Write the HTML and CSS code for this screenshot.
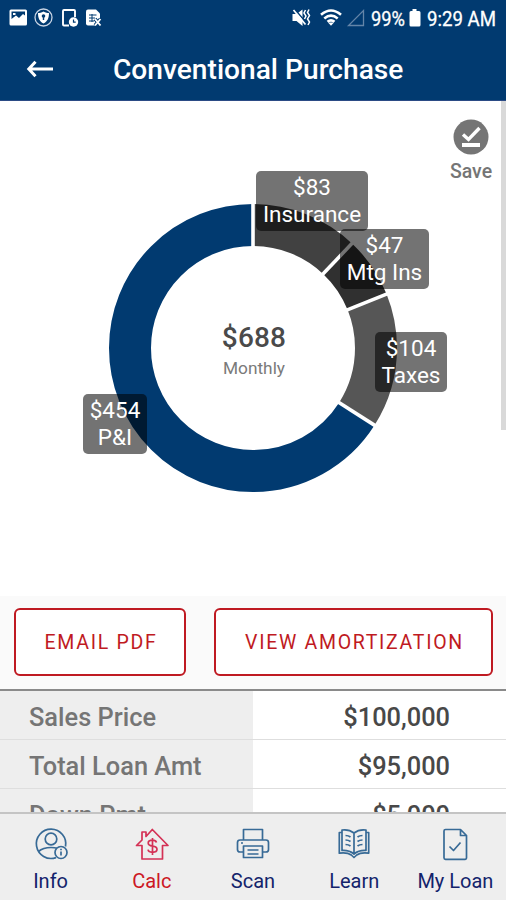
FILE: index.html
```
<!DOCTYPE html>
<html lang="en">
<head>
<meta charset="utf-8">
<title>Conventional Purchase</title>
<link rel="stylesheet" href="styles.css">
</head>
<body>
<div class="app">
	<div class="header">
		<svg class="status" width="506" height="37" viewBox="0 0 506 37">
			<!-- notifications -->
			<g fill="#fff">
				<path fill-rule="evenodd" d="M11 9.500h14.500q1.500 0 1.500 1.500v13q0 1.500-1.500 1.500h-14.500q-1.500 0-1.500-1.500v-13q0-1.500 1.500-1.500zM11.500 11.500v7.500l4.500-3.500 3 2.500 4-4 2 1.500v-4zM13 13h2.500v2h-2.500z"/>
				<circle cx="43.500" cy="17.500" r="8.500" fill="none" stroke="#c9d4e4" stroke-width="1.300"/>
				<path d="M43.500 11.500c2 1.300 4 1.500 5.500 1.500 0 5-1.500 8.500-5.500 10.500-4-2-5.500-5.500-5.500-10.500 1.500 0 3.500-.2 5.500-1.500z"/>
				<circle cx="43.500" cy="16" r="1.800" fill="#013a70"/>
				<path d="M42.800 16h1.400v4h-1.400z" fill="#013a70"/>
				<path d="M75 17v-6q0-1-1-1h-10q-1 0-1 1v13.500q0 1 1 1h5" fill="none" stroke="#fff" stroke-width="1.900"/>
				<circle cx="73.500" cy="22" r="4.700"/>
				<path d="M73.500 19.500v2.700h2.200" fill="none" stroke="#013a70" stroke-width="1.200"/>
				<path d="M88 9.500h8l4 4v6l-3 6h-9q-2 0-2-2v-12q0-2 2-2z"/>
				<path d="M89 15h7.500M89 18h6M89 21h5M92 14v8" stroke="#013a70" stroke-width="1"/>
				<path d="M95 19l5.500 6.500M100.500 19l-5.500 6.500" stroke="#013a70" stroke-width="3.500"/>
				<path d="M95 19l5.500 6.500M100.500 19l-5.500 6.500" stroke="#fff" stroke-width="1.900"/>
			</g>
			<!-- muted, wifi, signal, battery -->
			<path d="M292.500 14h4l6-4.500v16.500l-6-5h-4z" fill="#fff"/>
			<path d="M295 9.500l11 13" stroke="#013a70" stroke-width="1.500"/>
			<path d="M293.500 10l12 14.500" stroke="#fff" stroke-width="1.700"/>
			<path d="M305.500 10l-1.500 3 2 3-1.500 3M309 9.500l-1.500 3 2 3-2 3.500 2 3-1.500 3" fill="none" stroke="#fff" stroke-width="1.500"/>
			<g fill="none" stroke="#fff" stroke-width="2.600">
				<path d="M321 14.800q10-8.600 20 0"/>
				<path d="M324.300 18.500q6.700-5.700 13.400 0"/>
				<path d="M327.500 21.800q3.500-3 7 0"/>
			</g>
			<path d="M328 22.500h6l-3 3.200z" fill="#fff"/>
			<path d="M363.500 10.500v15h-15z" fill="none" stroke="#6485a8" stroke-width="1.300"/>
			<text x="371" y="26" textLength="34" lengthAdjust="spacingAndGlyphs">99%</text>
			<path d="M412.500 9h4v2h2.500q1.500 0 1.500 1.500v12.500q0 1.500-1.500 1.500h-8q-1.500 0-1.500-1.500v-12.500q0-1.500 1.500-1.500h1.500z" fill="#fff"/>
			<text x="427" y="26" textLength="69" lengthAdjust="spacingAndGlyphs">9:29 AM</text>
		</svg>
		<div class="titleBar">
			<svg class="back" width="28" height="20" viewBox="0 0 28 20"><path d="M27 10H3M9.500 2.800L2.800 10l6.700 7.200" fill="none" stroke="#fff" stroke-width="3"/></svg>
			<h1>Conventional Purchase</h1>
		</div>
	</div>

	<div class="chart">
		<svg class="donut" width="290" height="290" viewBox="-145 -145 290 290">
			<g class="slices" transform="rotate(-90)" fill="none" stroke-width="42">
				<circle r="123" pathLength="688" stroke="#414141" stroke-dasharray="83 605"/>
				<circle r="123" pathLength="688" stroke="#303030" stroke-dasharray="47 641" stroke-dashoffset="-83"/>
				<circle r="123" pathLength="688" stroke="#565656" stroke-dasharray="104 584" stroke-dashoffset="-130"/>
				<circle r="123" pathLength="688" stroke="#013a70" stroke-dasharray="454 234" stroke-dashoffset="-234"/>
			</g>
			<g stroke="#fff" stroke-width="3.600">
				<path d="M0-99V-148"/>
				<path d="M0-99V-148" transform="rotate(43.430)"/>
				<path d="M0-99V-148" transform="rotate(68.020)"/>
				<path d="M0-99V-148" transform="rotate(122.440)"/>
			</g>
		</svg>
		<div class="total">
			<b>$688</b>
			<span>Monthly</span>
		</div>
		<div class="tag insurance">$83<br>Insurance</div>
		<div class="tag mtg">$47<br>Mtg Ins</div>
		<div class="tag taxes">$104<br>Taxes</div>
		<div class="tag pi">$454<br>P&amp;I</div>
		<div class="save">
			<svg width="36" height="36" viewBox="0 0 36 36">
				<circle cx="18" cy="18" r="17.500" fill="#757575"/>
				<path d="M10 15.500l5.500 5L26.500 9" fill="none" stroke="#fff" stroke-width="3.400"/>
				<path d="M9 24h18v4H9z" fill="#fff"/>
			</svg>
			<span>Save</span>
		</div>
		<div class="scrollbar"></div>
	</div>

	<div class="buttons">
		<a class="btn email">EMAIL PDF</a>
		<a class="btn view">VIEW AMORTIZATION</a>
	</div>

	<ul class="rows">
		<li><span>Sales Price</span><b>$100,000</b></li>
		<li><span>Total Loan Amt</span><b>$95,000</b></li>
		<li><span>Down Pmt</span><b>$5,000</b></li>
	</ul>

	<div class="nav">
		<a>
			<svg width="36" height="36" viewBox="0 0 36 36">
				<path d="M23 31.600A14.700 14.700 0 1 1 32.500 20.500"/>
				<circle cx="18" cy="13" r="5.800"/>
				<path d="M5.500 25.500q4.500-4 12.500-4 4 0 6 .8"/>
				<circle cx="28" cy="26.500" r="6"/>
				<path d="M28 25.500v4M28 22.800v1.400"/>
			</svg>
			<span>Info</span>
		</a>
		<a class="active">
			<svg width="36" height="36" viewBox="0 0 36 36">
				<path d="M8 19.500H2.500L8 14V6h4v4.500l6.300-7L34 19.500h-5.500V33H8z"/>
				<path d="M22.500 16.500q-.8-2.300-4-2.300-4.300 0-4.300 2.900 0 2.500 4.300 3 4.500.5 4.500 3.200 0 3-4.500 3-4 0-4.500-2.600M18.500 12v17"/>
			</svg>
			<span>Calc</span>
		</a>
		<a>
			<svg width="36" height="36" viewBox="0 0 36 36">
				<path d="M8.500 14V3.500h19V14M8.500 26H5q-2.500 0-2.500-2.500v-7Q2.500 14 5 14h26q2.500 0 2.500 2.500v7q0 2.500-2.500 2.500h-3.500"/>
				<path d="M8.500 20h19v11.500h-19zM12.500 24h11M12.500 28h11M6 17h2"/>
			</svg>
			<span>Scan</span>
		</a>
		<a>
			<svg width="36" height="36" viewBox="0 0 36 36">
				<path d="M18 7q-5-4-12-3v20.500q7-.5 12 3.500 5-4 12-3.500V4q-7-1-12 3zM18 7v21"/>
				<path d="M6 6.500H3.300v20.700q8-1 12 1.800l2.700 2.500 2.700-2.500q4-2.800 12-1.800V6.500H30"/>
				<path d="M9.500 9.500q3 0 5 1.500M9.500 14q3 0 5 1.500M9.500 18.500q3 0 5 1.500M26.500 9.500q-3 0-5 1.500M26.500 14q-3 0-5 1.500M26.500 18.500q-3 0-5 1.500"/>
			</svg>
			<span>Learn</span>
		</a>
		<a>
			<svg width="36" height="36" viewBox="0 0 36 36">
				<path d="M8.500 3.500h15l6 6V32q0 1.300-1.300 1.300H8.500q-1.500 0-1.500-1.500V5q0-1.500 1.500-1.500zM23.500 3.500v6h6"/>
				<path d="M12.500 20.500l4 4 7-8"/>
			</svg>
			<span>My Loan</span>
		</a>
	</div>
</div>
</body>
</html>
```
FILE: styles.css
```
*{
	box-sizing:border-box;
}
body{
	margin:0;
	font-family:Roboto,"Liberation Sans",sans-serif;
	background:#fff;
}
.app{
	display:flex;
	flex-direction:column;
	width:506px;
	height:900px;
	overflow:hidden;
}
.header{
	height:101px;
	flex:none;
	background:#013a70;
	border-bottom:1px solid #2b4b85;
	color:#fff;
}
.status{
	display:block;
}
.status text{
	font-size:20.5px;
	fill:#fff;
	stroke:#fff;
	stroke-width:.3px;
}
.titleBar{
	display:flex;
	align-items:center;
	height:63px;
	padding-left:26px;
}
.titleBar h1{
	margin:2px 0 0 59px;
	font-size:28.150px;
	font-weight:500;
	line-height:36px;
	white-space:nowrap;
}

/* chart */
.chart{
	position:relative;
	display:flex;
	justify-content:center;
	height:495px;
	flex:none;
	padding-top:102px;
}
.donut{
	display:block;
}
.total{
	position:absolute;
	top:219px;
	left:154px;
	width:200px;
	text-align:center;
}
.total b{
	display:block;
	font-size:28px;
	font-weight:500;
	line-height:36px;
	letter-spacing:.2px;
	color:#4a4a4a;
}
.total span{
	display:block;
	font-size:17.300px;
	line-height:24px;
	color:#7a7a7a;
}
.tag{
	position:absolute;
	height:60px;
	padding-top:3px;
	border-radius:5px;
	background:rgba(0,0,0,.55);
	color:#fff;
	font-size:22.500px;
	line-height:26.500px;
	text-align:center;
	white-space:nowrap;
}
.insurance{
	left:256px;
	top:70px;
	width:112px;
}
.mtg{
	left:340px;
	top:128px;
	width:89px;
}
.taxes{
	left:375px;
	top:231px;
	width:72px;
}
.pi{
	left:83px;
	top:293px;
	width:64px;
}
.save{
	position:absolute;
	top:18px;
	right:11px;
	width:48px;
	text-align:center;
	color:#757575;
	font-size:19.500px;
	font-weight:500;
	line-height:24px;
}
.save svg{
	display:block;
	margin:0 auto 5px;
}
.scrollbar{
	position:absolute;
	top:0;
	right:0;
	width:5px;
	height:329px;
	background:#d9d9d9;
}

.buttons{
	display:flex;
	gap:28px;
	height:95px;
	flex:none;
	padding:12px 13px 0 14px;
	background:#fafafa;
	border-bottom:2px solid #8a8a8a;
}
.btn{
	height:68px;
	border:2px solid #bf1a22;
	border-radius:6px;
	background:#fff;
	color:#bf1a22;
	font-size:19.500px;
	line-height:66px;
	letter-spacing:1.700px;
	text-indent:2px;
	text-align:center;
	white-space:nowrap;
}
.email{
	width:172px;
}
.view{
	width:279px;
}

/* loan details */
.rows{
	flex:1;
	min-height:0;
	overflow:hidden;
	margin:0;
	padding:0;
	list-style:none;
}
.rows li{
	display:flex;
	height:49px;
	font-size:25.400px;
	line-height:52px;
	border-bottom:1px solid #dedede;
}
.rows span{
	width:253px;
	padding-left:29px;
	background:#eee;
	color:#757575;
	font-weight:500;
}
.rows b{
	flex:1;
	padding-right:56px;
	text-align:right;
	font-weight:500;
	color:#484848;
}

.nav{
	display:flex;
	height:88px;
	flex:none;
	border-top:2px solid #c4c4c4;
	background:#eee;
}
.nav a{
	flex:1;
	padding-top:12px;
	text-align:center;
	color:#13236b;
	font-size:20px;
	line-height:26px;
	white-space:nowrap;
}
.nav svg{
	display:block;
	margin:0 auto 6px;
	fill:none;
	stroke:#376a96;
	stroke-width:1.700;
	stroke-linejoin:round;
}
.nav .active{
	color:#cc1724;
}
.nav .active svg{
	stroke:#d43155;
}
```
